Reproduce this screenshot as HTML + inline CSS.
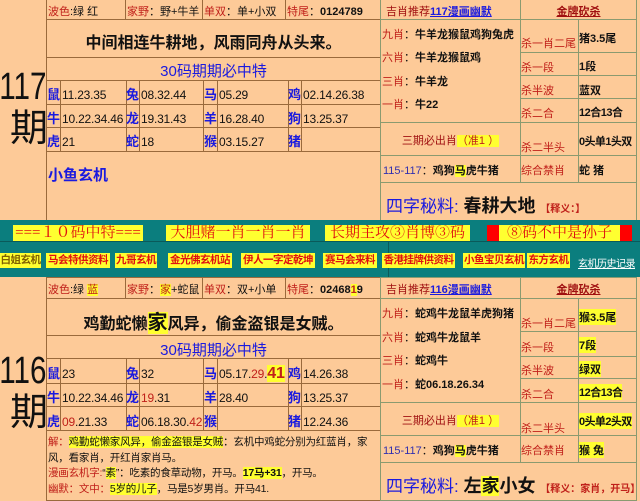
<!DOCTYPE html>
<html><head><meta charset="utf-8">
<style>
*{margin:0;padding:0;box-sizing:border-box}
body{width:640px;height:500px;overflow:hidden;background:#fdca98;font-family:"Liberation Sans","Noto Sans CJK SC",sans-serif;position:relative;font-size:11px;color:#111}
.a{position:absolute;white-space:nowrap}
.c{position:absolute;border:1px solid #9a6a3c}
.g{position:absolute;border:1px solid #8a9a70}
.r{color:#c0201a}
.b{color:#1a1adf}
.y{background:#ffff30}
.z{color:#1a1adf;font-weight:bold;font-size:13px;display:inline-block;width:14px;margin-right:1px}
.n{font-size:12px;letter-spacing:-0.2px}
.band{position:absolute;left:0;top:220px;width:640px;height:57px;background:#0b7e7e}
.bx{position:absolute;background:#ffff30;color:#e01010;font-family:"Liberation Serif","Noto Serif CJK SC",serif;font-size:15px;height:16px;line-height:16px;text-align:center;white-space:nowrap;overflow:hidden}
.lk{position:absolute;top:253px;height:15px;line-height:15px;background:#ffff30;color:#e01010;font-size:10.5px;font-weight:bold;text-align:center;white-space:nowrap;overflow:hidden;letter-spacing:-0.5px}
.big{font-size:38px;line-height:42px;text-align:right;width:60px;transform:scaleX(0.78);transform-origin:right center}
</style></head><body>

<!-- ===== 117 ===== -->
<div class="a big" style="left:-14px;top:66px">117</div>
<div class="a big" style="left:-12px;top:108px;transform:none">期</div>
<div class="c" style="left:46px;top:-1px;width:335px;height:222px"></div>
<div class="c" style="left:46px;top:-1px;width:335px;height:21px"></div>
<div class="c" style="left:46px;top:19px;width:335px;height:39px"></div>
<div class="c" style="left:46px;top:57px;width:335px;height:24px"></div>
<div class="c" style="left:46px;top:80px;width:335px;height:25px"></div>
<div class="c" style="left:46px;top:127px;width:335px;height:25px"></div>
<div class="c" style="left:125px;top:-1px;width:78px;height:21px"></div>
<div class="c" style="left:202px;top:-1px;width:84px;height:21px"></div>
<div class="c" style="left:60px;top:80px;width:67px;height:72px"></div>
<div class="c" style="left:139px;top:80px;width:65px;height:72px"></div>
<div class="c" style="left:217px;top:80px;width:72px;height:72px"></div>
<div class="c" style="left:301px;top:80px;width:80px;height:72px"></div>
<div class="a" style="left:48px;top:3px"><span class="r">波色</span>:绿 红</div>
<div class="a" style="left:127px;top:3px"><span class="r">家野</span>：野+牛羊</div>
<div class="a" style="left:204px;top:3px"><span class="r">单双</span>：单+小双</div>
<div class="a" style="left:287px;top:3px"><span class="r">特尾</span>：<b>0124789</b></div>
<div class="a" style="left:47px;top:29px;width:333px;text-align:center;font-size:16px;font-weight:bold">中间相连牛耕地，风雨同舟从头来。</div>
<div class="a b" style="left:47px;top:60px;width:333px;text-align:center;font-size:15px">30码期期必中特</div>
<div class="a n" style="left:47px;top:84px"><span class="z">鼠</span>11.23.35</div>
<div class="a n" style="left:47px;top:108px"><span class="z">牛</span>10.22.34.46</div>
<div class="a n" style="left:47px;top:131px"><span class="z">虎</span>21</div>
<div class="a n" style="left:126px;top:84px"><span class="z">兔</span>08.32.44</div>
<div class="a n" style="left:126px;top:108px"><span class="z">龙</span>19.31.43</div>
<div class="a n" style="left:126px;top:131px"><span class="z">蛇</span>18</div>
<div class="a n" style="left:204px;top:84px"><span class="z">马</span>05.29</div>
<div class="a n" style="left:204px;top:108px"><span class="z">羊</span>16.28.40</div>
<div class="a n" style="left:204px;top:131px"><span class="z">猴</span>03.15.27</div>
<div class="a n" style="left:288px;top:84px"><span class="z">鸡</span>02.14.26.38</div>
<div class="a n" style="left:288px;top:108px"><span class="z">狗</span>13.25.37</div>
<div class="a n" style="left:288px;top:131px"><span class="z">猪</span></div>
<div class="a b" style="left:48px;top:164px;font-size:15px;font-weight:bold">小鱼玄机</div>

<div class="g" style="left:380px;top:-1px;width:257px;height:222px"></div>
<div class="g" style="left:380px;top:-1px;width:141px;height:21px"></div>
<div class="g" style="left:380px;top:19px;width:141px;height:104px"></div>
<div class="g" style="left:380px;top:122px;width:141px;height:34px"></div>
<div class="g" style="left:380px;top:155px;width:257px;height:28px"></div>
<div class="g" style="left:520px;top:19px;width:59px;height:164px"></div>
<div class="g" style="left:520px;top:52px;width:117px;height:24px"></div>
<div class="g" style="left:520px;top:98px;width:117px;height:25px"></div>
<div class="g" style="left:578px;top:19px;width:59px;height:164px"></div>
<div class="a" style="left:386px;top:3px;color:#a01010">吉肖推荐<u class="b" style="font-weight:bold">117漫画幽默</u></div>
<div class="a" style="left:520px;top:3px;width:117px;text-align:center;color:#a01010;text-decoration:underline;font-weight:bold">金牌砍杀</div>
<div class="a" style="left:382px;top:26px"><span class="r">九肖</span>：<b>牛羊龙猴鼠鸡狗兔虎</b></div>
<div class="a" style="left:382px;top:49px"><span class="r">六肖</span>：<b>牛羊龙猴鼠鸡</b></div>
<div class="a" style="left:382px;top:73px"><span class="r">三肖</span>：<b>牛羊龙</b></div>
<div class="a" style="left:382px;top:96px"><span class="r">一肖</span>：<b>牛22</b></div>
<div class="a" style="left:382px;top:132px;width:137px;text-align:center;color:#a01010">三期必出肖<span class="y r">（准1 ）</span></div>
<div class="a" style="left:383px;top:162px"><span style="color:#3030b0">115-117</span>：<b>鸡狗<span class="y">马</span>虎牛猪</b></div>
<div class="a r" style="left:521px;top:35px">杀一肖二尾</div><div class="a" style="left:579px;top:30px;font-weight:bold">猪3.5尾</div>
<div class="a r" style="left:521px;top:59px">杀一段</div><div class="a" style="left:579px;top:58px;font-weight:bold">1段</div>
<div class="a r" style="left:521px;top:82px">杀半波</div><div class="a" style="left:579px;top:82px;font-weight:bold">蓝双</div>
<div class="a r" style="left:521px;top:105px">杀二合</div><div class="a" style="left:579px;top:104px;font-weight:bold;letter-spacing:-0.5px">12合13合</div>
<div class="a r" style="left:521px;top:139px">杀二半头</div><div class="a" style="left:579px;top:133px;font-weight:bold;letter-spacing:-0.6px">0头单1头双</div>
<div class="a r" style="left:521px;top:162px">综合禁肖</div><div class="a" style="left:579px;top:162px;font-weight:bold">蛇 猪</div>
<div class="a" style="left:386px;top:192px;font-size:17px"><span class="b">四字秘料:</span> <b style="font-size:18px">春耕大地</b> <span class="r" style="font-size:10px;font-weight:bold">【释义：】</span></div>

<!-- ===== band ===== -->
<div class="band"></div>
<div class="a" style="left:0;top:241px;width:640px;height:1px;background:#0a5a5a"></div>
<div class="a" style="left:388px;top:242px;width:1px;height:35px;background:#0a5a5a"></div>
<div class="bx" style="left:13px;top:225px;width:130px">===１０码中特===</div>
<div class="bx" style="left:166px;top:225px;width:144px">大胆赌一肖一肖一肖</div>
<div class="bx" style="left:325px;top:225px;width:145px">长期主攻③肖博③码</div>
<div class="bx" style="left:487px;top:225px;width:145px;background:linear-gradient(90deg,#f00 0,#f00 12px,#ffff30 12px,#ffff30 133px,#f00 133px)">⑧码不中是孙子</div>
<div class="lk" style="left:0;width:41px;color:#806000">白姐玄机</div>
<div class="lk" style="left:46px;width:64px">马会特供资料</div>
<div class="lk" style="left:115px;width:42px">九哥玄机</div>
<div class="lk" style="left:168px;width:64px">金光佛玄机站</div>
<div class="lk" style="left:241px;width:74px">伊人一字定乾坤</div>
<div class="lk" style="left:323px;width:54px">赛马会来料</div>
<div class="lk" style="left:382px;width:73px">香港挂牌供资料</div>
<div class="lk" style="left:463px;width:62px">小鱼宝贝玄机</div>
<div class="lk" style="left:527px;width:43px">东方玄机</div>
<div class="a" style="left:578px;top:255px;color:#fff;font-size:10px;text-decoration:underline;letter-spacing:-0.5px">玄机历史记录</div>

<!-- ===== 116 ===== -->
<div class="a big" style="left:-14px;top:350px">116</div>
<div class="a big" style="left:-12px;top:392px;transform:none">期</div>
<div class="c" style="left:46px;top:277px;width:335px;height:224px"></div>
<div class="c" style="left:46px;top:277px;width:335px;height:22px"></div>
<div class="c" style="left:46px;top:298px;width:335px;height:38px"></div>
<div class="c" style="left:46px;top:335px;width:335px;height:24px"></div>
<div class="c" style="left:46px;top:358px;width:335px;height:26px"></div>
<div class="c" style="left:46px;top:406px;width:335px;height:25px"></div>
<div class="c" style="left:125px;top:277px;width:78px;height:22px"></div>
<div class="c" style="left:202px;top:277px;width:84px;height:22px"></div>
<div class="c" style="left:60px;top:358px;width:67px;height:73px"></div>
<div class="c" style="left:139px;top:358px;width:65px;height:73px"></div>
<div class="c" style="left:217px;top:358px;width:72px;height:73px"></div>
<div class="c" style="left:301px;top:358px;width:80px;height:73px"></div>
<div class="a" style="left:48px;top:281px"><span class="r">波色</span>:绿 <span class="y r">蓝</span></div>
<div class="a" style="left:127px;top:281px"><span class="r">家野</span>：<span class="y r">家</span>+蛇鼠</div>
<div class="a" style="left:204px;top:281px"><span class="r">单双</span>：双+小单</div>
<div class="a" style="left:287px;top:281px"><span class="r">特尾</span>：<b>02468<span class="y r">1</span>9</b></div>
<div class="a" style="left:47px;top:306px;width:333px;text-align:center;font-size:16px;font-weight:bold">鸡勤蛇懒<span class="y" style="font-size:20px">家</span>风异，偷金盗银是女贼。</div>
<div class="a b" style="left:47px;top:339px;width:333px;text-align:center;font-size:15px">30码期期必中特</div>
<div class="a n" style="left:47px;top:363px"><span class="z">鼠</span>23</div>
<div class="a n" style="left:47px;top:387px"><span class="z">牛</span>10.22.34.46</div>
<div class="a n" style="left:47px;top:411px"><span class="z">虎</span><span class="r">09</span>.21.33</div>
<div class="a n" style="left:126px;top:363px"><span class="z">兔</span>32</div>
<div class="a n" style="left:126px;top:387px"><span class="z">龙</span><span class="r">19</span>.31</div>
<div class="a n" style="left:126px;top:411px"><span class="z">蛇</span>06.18.30.<span class="r">42</span></div>
<div class="a n" style="left:204px;top:363px"><span class="z">马</span>05.17.<span class="r">29</span>.<span class="y r" style="font-size:16px;font-weight:bold">41</span></div>
<div class="a n" style="left:204px;top:387px"><span class="z">羊</span>28.40</div>
<div class="a n" style="left:204px;top:411px"><span class="z">猴</span></div>
<div class="a n" style="left:288px;top:363px"><span class="z">鸡</span>14.26.38</div>
<div class="a n" style="left:288px;top:387px"><span class="z">狗</span>13.25.37</div>
<div class="a n" style="left:288px;top:411px"><span class="z">猪</span>12.24.36</div>
<div class="a" style="left:48px;top:435px;width:332px;white-space:normal;font-size:10.5px;line-height:15.5px;letter-spacing:-0.2px"><span class="r">解：</span><span class="y">鸡勤蛇懒家风异，偷金盗银是女贼</span>：玄机中鸡蛇分别为红蓝肖，家风，看家肖，开红肖家肖马。<br><span class="r">漫画玄机字:</span>“<span class="y">素</span>”：吃素的食草动物，开马。<b class="y">17马+31</b>，开马。<br><span class="r">幽默：文中：</span><span class="y">5岁的儿子</span>，马是5岁男肖。开马41.</div>

<div class="g" style="left:380px;top:277px;width:257px;height:224px"></div>
<div class="g" style="left:380px;top:277px;width:141px;height:22px"></div>
<div class="g" style="left:380px;top:298px;width:141px;height:105px"></div>
<div class="g" style="left:380px;top:402px;width:141px;height:34px"></div>
<div class="g" style="left:380px;top:435px;width:257px;height:28px"></div>
<div class="g" style="left:520px;top:298px;width:59px;height:165px"></div>
<div class="g" style="left:520px;top:331px;width:117px;height:26px"></div>
<div class="g" style="left:520px;top:378px;width:117px;height:25px"></div>
<div class="g" style="left:578px;top:298px;width:59px;height:165px"></div>
<div class="a" style="left:386px;top:281px;color:#a01010">吉肖推荐<u class="b" style="font-weight:bold">116漫画幽默</u></div>
<div class="a" style="left:520px;top:281px;width:117px;text-align:center;color:#a01010;text-decoration:underline;font-weight:bold">金牌砍杀</div>
<div class="a" style="left:382px;top:305px"><span class="r">九肖</span>：<b>蛇鸡牛龙鼠羊虎狗猪</b></div>
<div class="a" style="left:382px;top:329px"><span class="r">六肖</span>：<b>蛇鸡牛龙鼠羊</b></div>
<div class="a" style="left:382px;top:352px"><span class="r">三肖</span>：<b>蛇鸡牛</b></div>
<div class="a" style="left:382px;top:376px"><span class="r">一肖</span>：<b>蛇06.18.26.34</b></div>
<div class="a" style="left:382px;top:412px;width:137px;text-align:center;color:#a01010">三期必出肖<span class="y r">（准1 ）</span></div>
<div class="a" style="left:383px;top:442px"><span style="color:#3030b0">115-117</span>：<b>鸡狗<span class="y">马</span>虎牛猪</b></div>
<div class="a r" style="left:521px;top:315px">杀一肖二尾</div><div class="a y" style="left:579px;top:309px;font-weight:bold">猴3.5尾</div>
<div class="a r" style="left:521px;top:339px">杀一段</div><div class="a y" style="left:579px;top:337px;font-weight:bold">7段</div>
<div class="a r" style="left:521px;top:362px">杀半波</div><div class="a y" style="left:579px;top:361px;font-weight:bold">绿双</div>
<div class="a r" style="left:521px;top:386px">杀二合</div><div class="a y" style="left:579px;top:384px;font-weight:bold;letter-spacing:-0.5px">12合13合</div>
<div class="a r" style="left:521px;top:420px">杀二半头</div><div class="a y" style="left:579px;top:413px;font-weight:bold;letter-spacing:-0.6px">0头单2头双</div>
<div class="a r" style="left:521px;top:442px">综合禁肖</div><div class="a y" style="left:579px;top:442px;font-weight:bold">猴 兔</div>
<div class="a" style="left:386px;top:472px;font-size:17px"><span class="b">四字秘料:</span> <b style="font-size:18px">左<span class="y">家</span>小女</b> <span class="r" style="font-size:10px;font-weight:bold">【释义：家肖，开马】</span></div>
</body></html>
